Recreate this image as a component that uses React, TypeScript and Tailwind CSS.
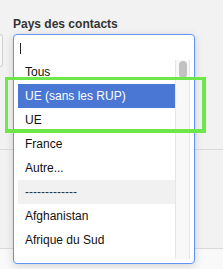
const options = [
  { label: "Tous" },
  { label: "UE (sans les RUP)", active: true },
  { label: "UE" },
  { label: "France" },
  { label: "Autre..." },
  { label: "-------------", separator: true },
  { label: "Afghanistan" },
  { label: "Afrique du Sud" },
  { label: "Albanie" },
];

export default function App() {
  return (
    <div
      className="relative w-[223px] h-[269px] overflow-hidden bg-[#f2f2f2] text-[#222]"
      style={{ fontFamily: '"Liberation Sans", Arial, sans-serif' }}
    >
      {/* page behind the open dropdown */}
      <div className="flex flex-col h-full">
        <div className="pl-[13px] pt-[17px] h-[34px] text-[12px] font-bold leading-[14px] text-[#333]">
          Pays des contacts
        </div>
        <div className="flex h-[33px]">
          <div className="w-[3px] h-full rounded-r-[4px] border border-l-0 border-[#d0d0d0] bg-[#f7f7f7]" />
        </div>
        <div className="h-[82px]" />
        <div className="h-[99px] border-t border-[#dadada]" />
        <div className="flex-1 border-t border-[#dadada] bg-[#f9f9f9]" />
      </div>

      {/* open select dropdown */}
      <div className="absolute left-[13px] top-[34px] w-[182px] h-[230px] flex flex-col rounded-[4px] border border-[#5f93f5] bg-white shadow-[0_2px_8px_rgba(0,0,0,0.15)]">
        <div className="h-[25px] shrink-0 flex items-center pl-[6px] pt-[1px]">
          <span className="block w-px h-[11px] bg-[#222]" />
        </div>
        <div className="flex h-[199px] px-[4px] overflow-hidden">
          <ul className="w-[157px] flex flex-col">
            {options.map((o) => (
              <li
                key={o.label}
                className={
                  "h-[24px] shrink-0 flex items-center pl-[7px] text-[12px] " +
                  (o.active
                    ? "bg-[#4a77d3] text-white"
                    : o.separator
                      ? "bg-[#f1f1f1] text-[#333]"
                      : "text-[#111]")
                }
              >
                {o.label}
              </li>
            ))}
          </ul>
          <div className="w-[15px] h-full border-x border-[#e6e6e6] bg-[#f8f8f8] pl-[3px] pt-px">
            <div className="w-[8px] h-[17px] rounded-full bg-[#c2c2c2]" />
          </div>
        </div>
      </div>

      {/* highlight box */}
      <div className="absolute left-[5px] top-[77px] w-[201px] h-[56px] border-[3px] border-b-4 border-r-4 border-[#6ee848]" />
    </div>
  );
}
